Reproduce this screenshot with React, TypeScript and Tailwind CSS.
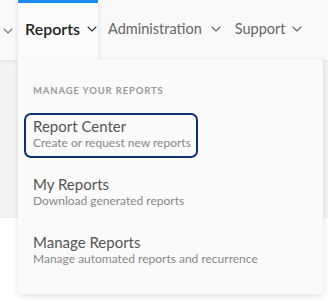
import React from 'react';

function Chevron({ className = '' }: { className?: string }) {
  return (
    <svg viewBox="0 0 10 6" className={`h-[6px] w-[10px] ${className}`} fill="none">
      <polyline points="1,1 5,5 9,1" stroke="currentColor" strokeWidth="1.1" strokeLinecap="round" strokeLinejoin="round" />
    </svg>
  );
}

const items = [
  { title: 'Report Center', sub: 'Create or request new reports', focused: true },
  { title: 'My Reports', sub: 'Download generated reports', focused: false },
  { title: 'Manage Reports', sub: 'Manage automated reports and recurrence', focused: false }
];

export default function App() {
  return (
    <div className="relative h-[301px] w-[328px] overflow-hidden bg-white font-['Lato',sans-serif]">
      {/* Top nav */}
      <nav className="relative z-10 flex h-[60px] items-stretch bg-[#f9f9f9] shadow-[0_1px_3px_rgba(0,0,0,0.08)]">
        <div className="flex w-[18px] items-center pb-[3px] pl-[3px] pt-[4px] text-[#777]">
          <Chevron />
        </div>
        <div className="flex w-[80px] items-center gap-[7px] border-t-[3px] border-[#1a8cf0] bg-[#fcfcfc] pb-[5px] pl-[7px] shadow-[-2px_0_4px_rgba(0,0,0,0.06),2px_0_4px_rgba(0,0,0,0.06)]">
          <span className="text-[16px] font-semibold text-[#222]">Reports</span>
          <Chevron className="text-[#333]" />
        </div>
        <div className="ml-[10px] flex items-center gap-[9px] pb-[3px] text-[#666]">
          <span className="text-[14.5px]">Administration</span>
          <Chevron />
        </div>
        <div className="ml-[14px] flex items-center gap-[6px] pb-[3px] text-[#666]">
          <span className="text-[14.5px]">Support</span>
          <Chevron />
        </div>
      </nav>

      {/* Page band under nav */}
      <div className="h-[158px] border-b border-[#ececec] bg-[#f4f4f4]" />

      {/* Dropdown */}
      <div className="absolute left-[18px] top-[60px] z-20 h-[234px] w-[305px] rounded-b-[4px] bg-[#fafafa] shadow-[0_2px_6px_rgba(0,0,0,0.12)]">
        <div className="px-[15px] pt-[24px] text-[9.5px] font-bold tracking-[0.09em] text-[#999]">
          MANAGE YOUR REPORTS
        </div>
        <div className="mt-[15px] flex flex-col gap-[13px] pl-[6px]">
          {items.map((it) => (
            <div
              key={it.title}
              className={`flex h-[45px] w-[174px] flex-col rounded-[7px] border-2 px-[7px] pt-[2px] ${
                it.focused ? 'border-[#0b3275]' : 'border-transparent'
              }`}
            >
              <span className="text-[15px] leading-[18px] text-[#555]">{it.title}</span>
              <span className="whitespace-nowrap text-[12px] leading-[16px] text-[#888]">{it.sub}</span>
            </div>
          ))}
        </div>
      </div>
    </div>
  );
}
